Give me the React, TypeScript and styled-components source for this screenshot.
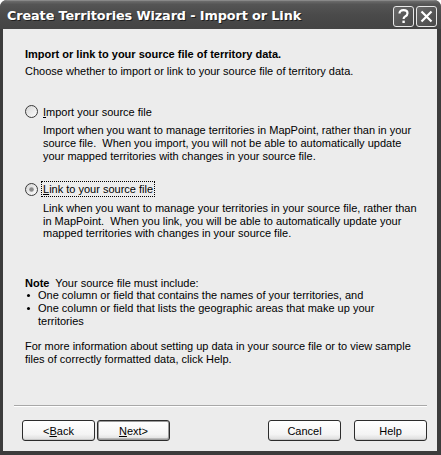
import styled, { createGlobalStyle } from "styled-components";

const GlobalStyle = createGlobalStyle`
  html, body {
    margin: 0;
    padding: 0;
    background: #ffffff;
  }
  * {
    box-sizing: border-box;
  }
`;

type Option = {
  id: string;
  key: string;
  rest: string;
  description: string[];
  selected: boolean;
};

const options: Option[] = [
  {
    id: "import",
    key: "I",
    rest: "mport your source file",
    description: [
      "Import when you want to manage territories in MapPoint, rather than in your",
      "source file.  When you import, you will not be able to automatically update",
      "your mapped territories with changes in your source file.",
    ],
    selected: false,
  },
  {
    id: "link",
    key: "L",
    rest: "ink to your source file",
    description: [
      "Link when you want to manage your territories in your source file, rather than",
      "in MapPoint.  When you link, you will be able to automatically update your",
      "mapped territories with changes in your source file.",
    ],
    selected: true,
  },
];

const buttons = [
  { id: "back", pre: "<", key: "B", rest: "ack", isDefault: false },
  { id: "next", pre: "", key: "N", rest: "ext>", isDefault: true },
];

const RadioIcon = ({ checked }: { checked: boolean }) => (
  <svg width="13" height="13" viewBox="0 0 13 13">
    <defs>
      <linearGradient id="radioFill" x1="0" y1="0" x2="1" y2="1">
        <stop offset="0" stopColor="#d4d4d4" />
        <stop offset="1" stopColor="#ffffff" />
      </linearGradient>
    </defs>
    <circle cx="6.5" cy="6.5" r="6" fill="url(#radioFill)" stroke="#3a3a3a" />
    {checked && <circle cx="6.5" cy="6.5" r="2.3" fill="#8a8a8a" />}
  </svg>
);

const App = () => {
  return (
    <>
      <GlobalStyle />
      <Window>
        <TitleBar>
          <Title>Create Territories Wizard - Import or Link</Title>
          <TitleButtons>
            <CaptionButton>
              <svg width="13" height="15" viewBox="0 0 13 15">
                <path
                  d="M2.5 4.5 Q2.5 1.2 6.5 1.2 Q10.5 1.2 10.5 4.3 Q10.5 6.2 8.2 7.4 Q6.6 8.3 6.6 10"
                  fill="none"
                  stroke="#fff"
                  strokeWidth="2.2"
                />
                <rect x="5.4" y="11.6" width="2.4" height="2.4" fill="#fff" />
              </svg>
            </CaptionButton>
            <CaptionButton>
              <svg width="13" height="13" viewBox="0 0 13 13">
                <path
                  d="M1.5 1.5 L11.5 11.5 M11.5 1.5 L1.5 11.5"
                  stroke="#fff"
                  strokeWidth="2.2"
                />
              </svg>
            </CaptionButton>
          </TitleButtons>
        </TitleBar>
        <Body>
          <Heading>Import or link to your source file of territory data.</Heading>
          <Intro>Choose whether to import or link to your source file of territory data.</Intro>

          {options.map((option, index) => (
            <OptionBlock key={option.id} $first={index === 0}>
              <RadioRow>
                <RadioIcon checked={option.selected} />
                <RadioLabel $focused={option.selected}>
                  <u>{option.key}</u>
                  {option.rest}
                </RadioLabel>
              </RadioRow>
              <Description>
                {option.description.map((line) => (
                  <div key={line}>{line}</div>
                ))}
              </Description>
            </OptionBlock>
          ))}

          <NoteBlock>
            <div>
              <b>Note</b>&nbsp; Your source file must include:
            </div>
            <BulletList>
              <li>One column or field that contains the names of your territories, and</li>
              <li>
                One column or field that lists the geographic areas that make up your
                <br />
                territories
              </li>
            </BulletList>
          </NoteBlock>

          <HelpText>
            For more information about setting up data in your source file or to view sample
            <br />
            files of correctly formatted data, click Help.
          </HelpText>
        </Body>
        <Footer>
          <Separator />
          <ButtonRow>
            <ButtonGroup>
              {buttons.map((b) => (
                <Button key={b.id} $isDefault={b.isDefault}>
                  {b.pre}
                  <u>{b.key}</u>
                  {b.rest}
                </Button>
              ))}
            </ButtonGroup>
            <ButtonGroup $gap={13}>
              <Button>Cancel</Button>
              <Button>Help</Button>
            </ButtonGroup>
          </ButtonRow>
        </Footer>
      </Window>
    </>
  );
};

export default App;

const Window = styled.div`
  width: 441px;
  height: 455px;
  display: flex;
  flex-direction: column;
  background: #3c3c3c;
  border-radius: 7px 7px 0 0;
  overflow: hidden;
  font-family: "Liberation Sans", Arial, sans-serif;
  font-size: 11px;
  color: #000;
`;

const TitleBar = styled.div`
  height: 29px;
  flex-shrink: 0;
  display: flex;
  align-items: center;
  justify-content: space-between;
  padding: 0 4px 0 7px;
  background: linear-gradient(to bottom, #6c6c6c 0%, #555 12%, #4a4a4a 50%, #444 100%);
  border-top: 1px solid #888;
`;

const Title = styled.div`
  font-family: "DejaVu Sans", Verdana, sans-serif;
  font-weight: bold;
  font-size: 12.8px;
  color: #fff;
  letter-spacing: -0.1px;
  text-shadow: 1px 1px 0 #202020;
  margin-top: 1px;
`;

const TitleButtons = styled.div`
  display: flex;
  gap: 2px;
  margin-top: 2px;
`;

const CaptionButton = styled.div`
  width: 21px;
  height: 21px;
  border: 1px solid #e8e8e8;
  border-radius: 3px;
  background: linear-gradient(135deg, #6a6a6a 0%, #555 60%, #4a4a4a 100%);
  display: flex;
  align-items: center;
  justify-content: center;
`;

const Body = styled.div`
  flex: 1;
  display: flex;
  flex-direction: column;
  margin: 0 4px 0 3px;
  padding: 18.6px 0 0 22px;
  background: #ececec;
  line-height: 12.7px;
`;

const Heading = styled.div`
  font-weight: bold;
`;

const Intro = styled.div`
  margin-top: 5px;
`;

const OptionBlock = styled.div<{ $first: boolean }>`
  display: flex;
  flex-direction: column;
  margin-top: ${({ $first }) => ($first ? 25.6 : 18.9)}px;
`;

const RadioRow = styled.div`
  display: flex;
  align-items: center;
  gap: 3px;
  height: 16px;
`;

const RadioLabel = styled.span<{ $focused: boolean }>`
  padding: 1px;
  border: 1px dotted ${({ $focused }) => ($focused ? "#000" : "transparent")};
  line-height: 12px;
`;

const Description = styled.div`
  margin: 4.7px 0 0 18px;
  white-space: pre;
`;

const NoteBlock = styled.div`
  margin-top: 36.5px;
`;

const BulletList = styled.ul`
  margin: 0;
  padding: 0 0 0 13px;
  list-style: none;

  li {
    position: relative;
  }

  li::before {
    content: "";
    position: absolute;
    left: -11px;
    top: 5px;
    width: 3px;
    height: 3px;
    border-radius: 50%;
    background: #000;
  }
`;

const HelpText = styled.div`
  margin-top: 12.6px;
`;

const Footer = styled.div`
  flex-shrink: 0;
  margin: 0 4px 4px 3px;
  background: #ececec;
  padding: 0 10px 10px 11px;
`;

const Separator = styled.div`
  height: 2px;
  border-top: 1px solid #a8a8a8;
  border-bottom: 1px solid #fff;
`;

const ButtonRow = styled.div`
  display: flex;
  justify-content: space-between;
  padding: 13px 0 0 8px;
`;

const ButtonGroup = styled.div<{ $gap?: number }>`
  display: flex;
  gap: ${({ $gap }) => $gap ?? 2}px;
`;

const Button = styled.div<{ $isDefault?: boolean }>`
  width: 73px;
  height: 21px;
  display: flex;
  align-items: center;
  justify-content: center;
  border: 1px solid #2c2c2c;
  border-radius: 3px;
  background: linear-gradient(to bottom, #ffffff 0%, #f4f4f4 70%, #dcdcdc 100%);
  box-shadow: ${({ $isDefault }) =>
    $isDefault ? "inset 0 0 0 1px #9a9a9a, inset 0 -1px 0 1px #b8b8b8" : "inset 0 -1px 0 #c8c8c8"};
`;
